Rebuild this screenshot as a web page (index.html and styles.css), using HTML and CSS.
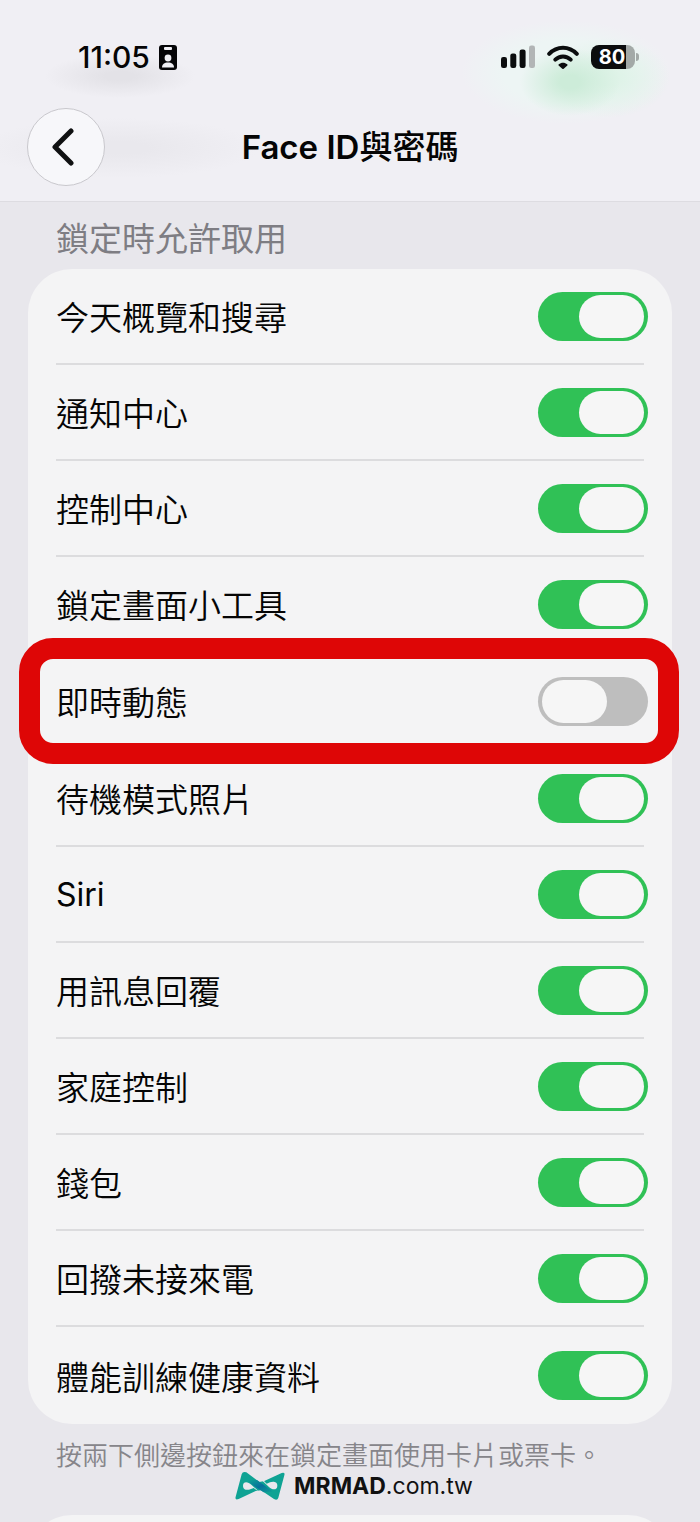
FILE: index.html
```html
<!DOCTYPE html>
<html lang="zh-Hant">
<head>
  <meta charset="UTF-8">
  <meta name="viewport" content="width=device-width, initial-scale=1">
  <title>Face ID與密碼</title>
  <link rel="stylesheet" href="styles.css">
</head>
<body>
  <header class="top-bar">
    <div class="status-bar">
      <div class="status-left">
        <span class="time">11:05</span>
        <svg class="badge-icon" viewBox="0 0 18 25" width="18" height="25">
          <rect width="18" height="25" rx="3" fill="#050507"/>
          <rect x="5" y="2" width="8" height="3" rx="1" fill="#f0eff4"/>
          <circle cx="9" cy="13" r="3.4" fill="#f0eff4"/>
          <path d="M3 22.5c0-3.5 2.400-5 6-5s6 1.500 6 5z" fill="#f0eff4"/>
        </svg>
      </div>
      <div class="status-right">
        <svg viewBox="0 0 34 24" width="34" height="24">
          <rect x="0" y="12" width="6" height="11" rx="2.200" fill="#0b0d0e"/>
          <rect x="9.300" y="8.500" width="6" height="14.500" rx="2.200" fill="#0b0d0e"/>
          <rect x="18.600" y="4.500" width="6" height="18.500" rx="2.200" fill="#0b0d0e"/>
          <rect x="28" y="0.500" width="6" height="22.500" rx="2.200" fill="#b2b5b6"/>
        </svg>
        <svg viewBox="0 0 32 24" width="32" height="24">
          <g fill="none" stroke="#0b0d0e" stroke-width="4" stroke-linecap="round">
            <path d="M2.200 8.800C10 .6 22 .6 29.800 8.800"/>
            <path d="M8.300 14.600c4.400-4.300 11-4.300 15.400 0"/>
          </g>
          <path d="M11.800 19.300c2.300-2.100 6.100-2.100 8.400 0 .5.500.4 1-.1 1.500L17 23.600c-.6.600-1.400.6-2 0l-3.100-2.800c-.5-.5-.6-1-.1-1.500z" fill="#0b0d0e"/>
        </svg>
        <div class="battery">
          <span class="battery-level">80</span>
        </div>
      </div>
    </div>
    <div class="nav-bar">
      <button class="back-btn" type="button" aria-label="返回">
        <svg viewBox="0 0 22 38" width="22" height="38">
          <path d="M19 3L3 19l16 16" fill="none" stroke="#101112" stroke-width="5" stroke-linecap="round" stroke-linejoin="round"/>
        </svg>
      </button>
      <h1>Face ID<span>與密碼</span></h1>
    </div>
  </header>

  <main>
    <h2>鎖定時允許取用</h2>

    <ul class="card">
      <li class="row"><label for="today">今天概覽和搜尋</label><input class="switch" type="checkbox" id="today" checked></li>
      <li class="row"><label for="notify">通知中心</label><input class="switch" type="checkbox" id="notify" checked></li>
      <li class="row"><label for="control">控制中心</label><input class="switch" type="checkbox" id="control" checked></li>
      <li class="row"><label for="widgets">鎖定畫面小工具</label><input class="switch" type="checkbox" id="widgets" checked></li>
      <li class="row highlight"><label for="live">即時動態</label><input class="switch" type="checkbox" id="live"></li>
      <li class="row"><label for="standby">待機模式照片</label><input class="switch" type="checkbox" id="standby" checked></li>
      <li class="row"><label for="siri" class="latin">Siri</label><input class="switch" type="checkbox" id="siri" checked></li>
      <li class="row"><label for="reply">用訊息回覆</label><input class="switch" type="checkbox" id="reply" checked></li>
      <li class="row"><label for="home">家庭控制</label><input class="switch" type="checkbox" id="home" checked></li>
      <li class="row"><label for="wallet">錢包</label><input class="switch" type="checkbox" id="wallet" checked></li>
      <li class="row"><label for="callback">回撥未接來電</label><input class="switch" type="checkbox" id="callback" checked></li>
      <li class="row"><label for="health">體能訓練健康資料</label><input class="switch" type="checkbox" id="health" checked></li>
    </ul>

    <p class="footnote">按兩下側邊按鈕來在鎖定畫面使用卡片或票卡。</p>

    <div class="brand">
      <svg viewBox="0 0 150 90" width="50" height="30">
        <defs>
          <linearGradient id="band" x1="0" y1="0" x2="1" y2="1">
            <stop offset="0" stop-color="#0fa394"/>
            <stop offset="0.5" stop-color="#086f9c"/>
            <stop offset="1" stop-color="#0fa394"/>
          </linearGradient>
        </defs>
        <path d="M34 4L73 33L88 30L140 6Q151 3 148 13L130 80Q127 90 117 84L78 58L62 60L11 84Q-1 89 2 77L20 10Q23 0 34 4Z" fill="#0fa394"/>
        <path d="M40 28L66 27L114 62L86 64L44 36Z" fill="url(#band)"/>
        <path d="M70 60L49 41C39 31 24 30 24 44C24 58 38 58 46 55L56 51L64 57Z" fill="#e9e8ed"/>
        <path d="M82 29L102 48C112 58 127 58 127 44C127 31 113 31 105 34L95 38L87 30Z" fill="#e9e8ed"/>
      </svg>
      <span><b>MRMAD</b>.com.tw</span>
    </div>

    <div class="next-section">
      <div class="card next-card"></div>
    </div>
  </main>
</body>
</html>
```
FILE: styles.css
```css
* {
  box-sizing: border-box;
}

body {
  display: flex;
  flex-direction: column;
  margin: 0;
  min-height: 100vh;
  background: #e8e7ec;
  color: #050505;
  font-family: Inter, "Noto Sans CJK TC", sans-serif;
}

.top-bar {
  height: 202px;
  padding: 40px 27px 0;
  border-bottom: 1px solid #dddce1;
  background:
    radial-gradient(ellipse 50px 34px at 570px 82px, #cdecd9 20%, transparent),
    radial-gradient(ellipse 62px 40px at 608px 78px, #dff3e8 20%, transparent),
    radial-gradient(ellipse 105px 52px at 566px 72px, #edf5f4 60%, transparent),
    radial-gradient(ellipse 75px 22px at 120px 76px, #e3e2e7 20%, transparent),
    radial-gradient(ellipse 140px 30px at 120px 148px, #e9e8ed 20%, transparent),
    #f0eff4;
}

.status-bar {
  display: flex;
  justify-content: space-between;
  align-items: center;
  height: 34px;
  padding: 0 34px 0 51px;
}

.status-left,
.status-right {
  display: flex;
  align-items: center;
}

.status-left {
  gap: 9px;
}

.status-right {
  gap: 12px;
}

.time {
  font-size: 30px;
  font-weight: 500;
}

.battery {
  position: relative;
  width: 44px;
  height: 24px;
  margin-right: 4px;
  border-radius: 8px;
  background: linear-gradient(90deg, #0b0d0e 35px, #a3a9a7 35px);
}

.battery::after {
  content: "";
  position: absolute;
  top: 8px;
  right: -4px;
  width: 3px;
  height: 8px;
  border-radius: 0 4px 4px 0;
  background: #a3a9a7;
}

.battery-level {
  display: block;
  padding-right: 2px;
  color: #fff;
  font-size: 20px;
  font-weight: 700;
  line-height: 24px;
  text-align: center;
}

.nav-bar {
  display: grid;
  grid-template-columns: 78px 1fr 78px;
  align-items: center;
  margin-top: 34px;
}

.back-btn {
  display: flex;
  justify-content: center;
  align-items: center;
  width: 78px;
  height: 78px;
  padding: 0 6px 0 0;
  border: 1px solid #c9c8cd;
  border-radius: 50%;
  background: #f7f7fa;
  cursor: pointer;
}

h1 {
  margin: 0;
  font-size: 33px;
  font-weight: 600;
  line-height: 40px;
  text-align: center;
}

h1 span {
  font-weight: 500;
}

main {
  display: flex;
  flex: 1;
  flex-direction: column;
  padding: 0 28px;
}

h2 {
  margin: 0;
  padding: 17px 28px 10px;
  color: #7e7d83;
  font-size: 33px;
  font-weight: 400;
  line-height: 40px;
}

.card {
  margin: 0;
  padding: 0;
  border-radius: 44px;
  background: #f4f4f5;
  list-style: none;
}

.row {
  display: flex;
  justify-content: space-between;
  align-items: center;
  height: 96px;
  margin: 0 28px;
  border-bottom: 2px solid #dcdcde;
  font-size: 33px;
  font-weight: 350;
}

.row:last-child {
  height: 97px;
  border-bottom: none;
}

.row label {
  flex: 1;
}

.row .latin {
  font-size: 32px;
  font-weight: 400;
}

/* the knob is drawn by ::before */
.switch {
  appearance: none;
  width: 110px;
  height: 49px;
  margin: 0 -4px 0 0;
  padding: 3px 4px;
  border-radius: 25px;
  background: #bebebe;
  cursor: pointer;
}

.switch::before {
  content: "";
  display: block;
  width: 65px;
  height: 43px;
  border-radius: 22px;
  background: #f6f6f6;
}

.switch:checked {
  background: #30c156;
}

.switch:checked::before {
  margin-left: auto;
}

.highlight {
  position: relative;
  height: 98px;
}

.highlight::after {
  content: "";
  position: absolute;
  inset: -15px -35px -15px -37px;
  border: 21px solid #de0606;
  border-radius: 34px;
  pointer-events: none;
}

.footnote {
  margin: 0;
  padding: 15px 28px 0;
  color: #86858a;
  font-size: 26px;
  font-weight: 350;
  line-height: 34px;
}

.brand {
  display: flex;
  justify-content: center;
  align-items: center;
  gap: 9px;
  height: 26px;
  padding-left: 8px;
  color: #111;
  font-size: 23px;
}

/* only the top edge of the next group shows */
.next-section {
  flex: 1 0 7px;
  height: 7px;
  margin-top: 16px;
  overflow: hidden;
}

.next-card {
  height: 100px;
}
```
